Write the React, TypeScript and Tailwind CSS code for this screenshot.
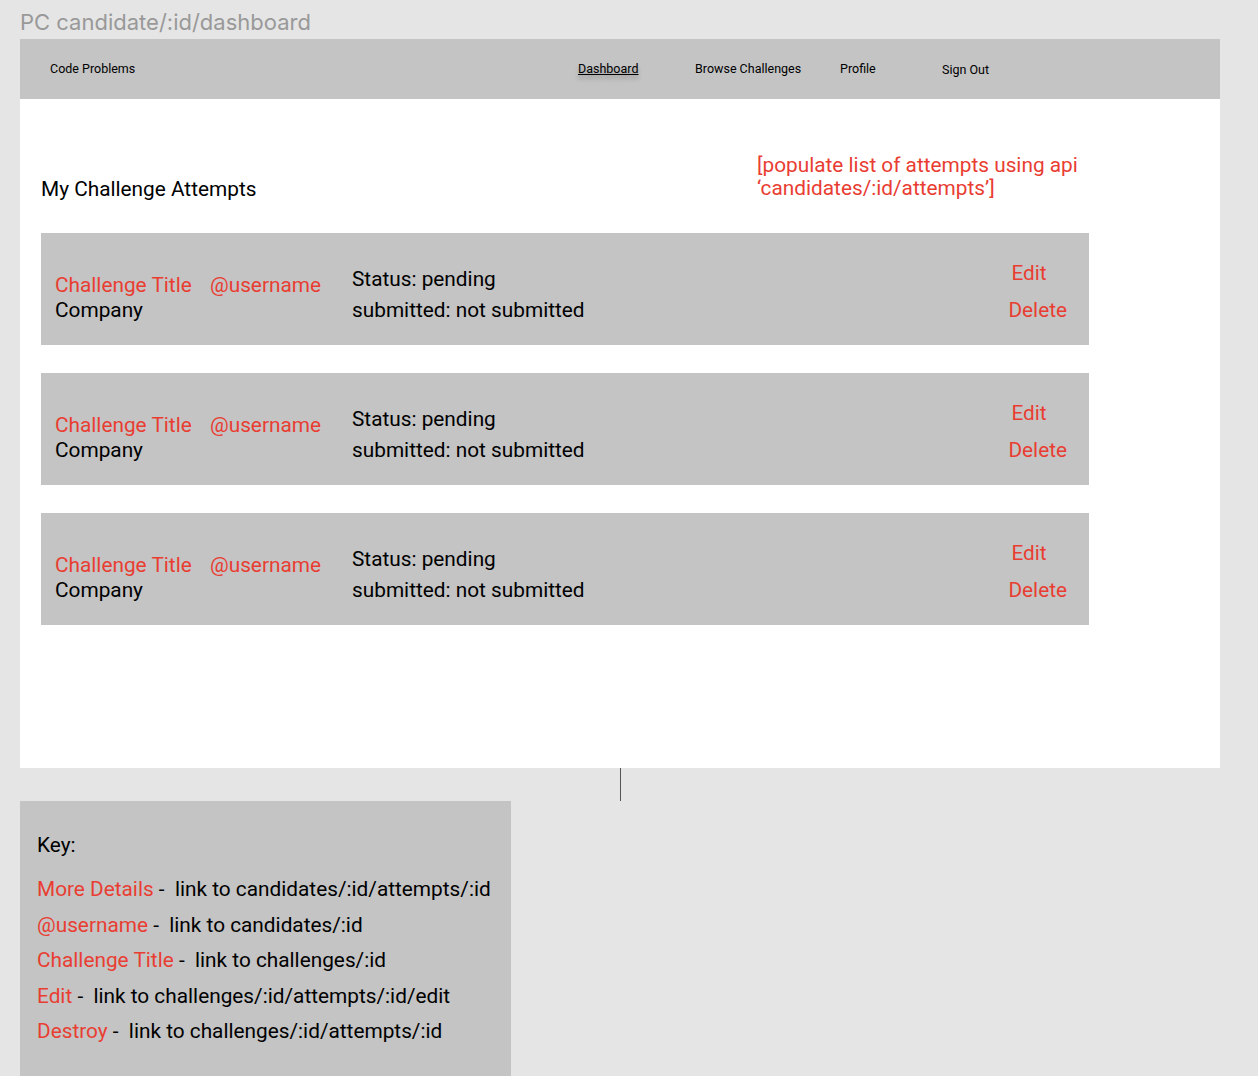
import React from 'react';

const RED = 'text-[#e93d32]';

function AttemptCard() {
  return (
    <div className="flex h-[112px] w-[1048px] items-start bg-[#c4c4c4] pl-[14px] pr-[22px] text-[20.8px] text-black">
      <div className="w-[297px] pt-[40px] leading-[25px]">
        <div className="flex">
          <span className={`${RED} w-[155px]`}>Challenge Title</span>
          <span className={RED}>@username</span>
        </div>
        <div>Company</div>
      </div>
      <div className="pt-[31px] leading-[31px]">
        <div>Status: pending</div>
        <div>submitted: not submitted</div>
      </div>
      <div className={`ml-auto pt-[22px] leading-[37px] ${RED}`}>
        <div className="pl-[3px]">Edit</div>
        <div>Delete</div>
      </div>
    </div>
  );
}

const keyRows = [
  { label: 'More Details', target: 'link to candidates/:id/attempts/:id' },
  { label: '@username', target: 'link to candidates/:id' },
  { label: 'Challenge Title', target: 'link to challenges/:id' },
  { label: 'Edit', target: 'link to challenges/:id/attempts/:id/edit' },
  { label: 'Destroy', target: 'link to challenges/:id/attempts/:id' },
];

export default function App() {
  return (
    <div className="min-h-[1076px] w-[1258px] overflow-hidden bg-[#e5e5e5] font-['Roboto',sans-serif]">
      {/* Frame title */}
      <div className="h-[39px] pl-[20px] pt-[11px] font-['Inter',sans-serif] text-[22px] leading-[22px] text-[#999999]">
        PC candidate/:id/dashboard
      </div>

      {/* Frame */}
      <div className="ml-[20px] w-[1200px] bg-white">
        {/* Nav */}
        <div className="flex h-[60px] items-center bg-[#c4c4c4] pl-[30px] text-[12.5px] text-black">
          <div className="w-[528px]">Code Problems</div>
          <div className="w-[117px] underline [text-shadow:0_4px_4px_rgba(0,0,0,0.25)]">Dashboard</div>
          <div className="w-[145px]">Browse Challenges</div>
          <div className="w-[102px]">Profile</div>
          <div className="pt-[2px]">Sign Out</div>
        </div>

        {/* Content */}
        <div className="h-[669px] pl-[21px] pt-[55px]">
          <div className="flex items-start">
            <h1 className="mt-[24px] w-[716px] text-[20.8px] leading-[23px] text-black">My Challenge Attempts</h1>
            <p className={`text-[20.8px] leading-[23px] ${RED}`}>
              [populate list of attempts using api
              <br />
              ‘candidates/:id/attempts’]
            </p>
          </div>
          <div className="mt-[32px] flex flex-col gap-[28px]">
            <AttemptCard />
            <AttemptCard />
            <AttemptCard />
          </div>
        </div>
      </div>

      {/* Connector */}
      <div className="ml-[620px] h-[33px] w-px bg-[#555555]" />

      {/* Key */}
      <div className="ml-[20px] h-[300px] w-[491px] bg-[#c4c4c4] pl-[17px] pt-[27px] text-[20.8px] leading-[35.5px] text-black">
        <div className="mb-[8.5px]">Key:</div>
        {keyRows.map(row => (
          <div key={row.label} className="whitespace-nowrap">
            <span className={RED}>{row.label}</span>
            <span> -&nbsp; {row.target}</span>
          </div>
        ))}
      </div>
    </div>
  );
}
